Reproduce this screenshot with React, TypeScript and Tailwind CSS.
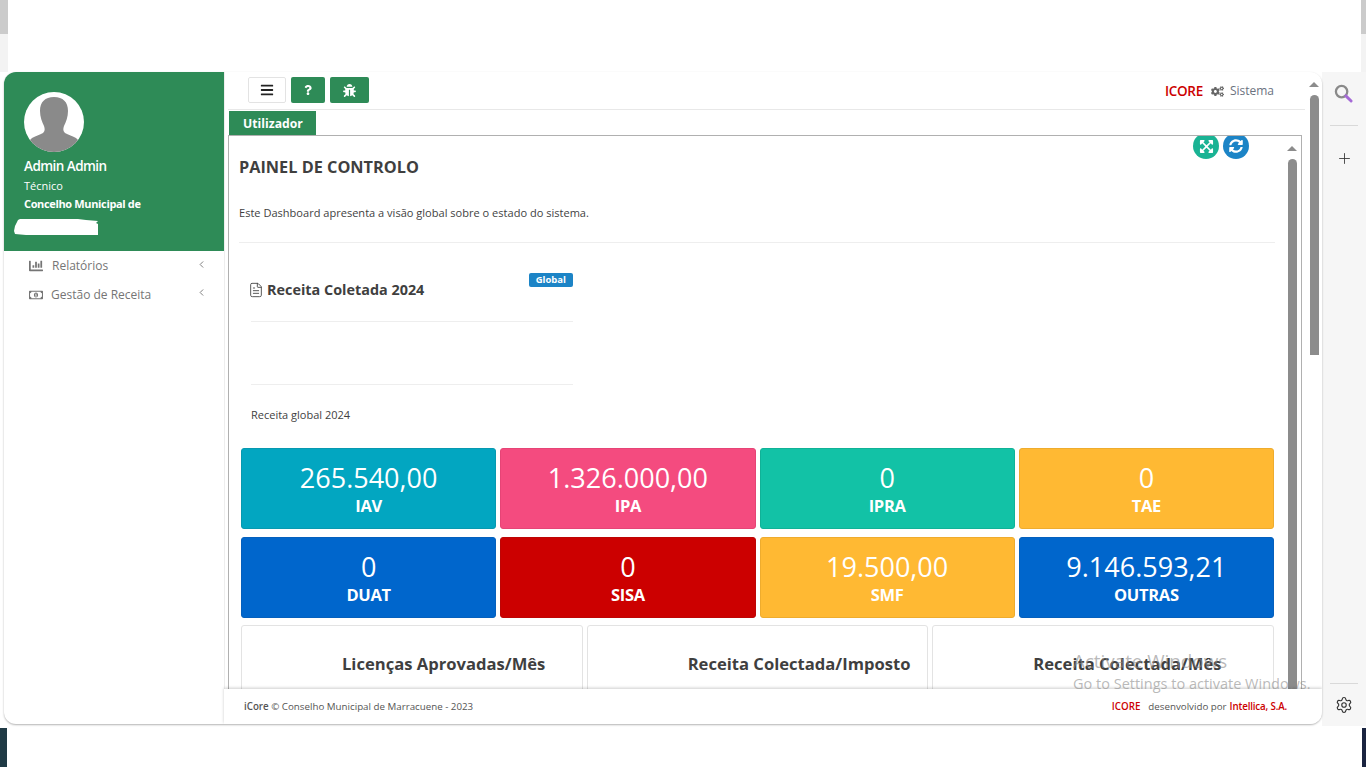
import { FaBars, FaBug, FaChartBar, FaCogs, FaExpandArrowsAlt, FaQuestion, FaRegMoneyBillAlt, FaSyncAlt } from "react-icons/fa";
import { ChevronLeft, FileText, Plus, Settings } from "lucide-react";

const stats = [
  { value: "265.540,00", label: "IAV", color: "bg-[#02a6c1] border-[#0799b0]" },
  { value: "1.326.000,00", label: "IPA", color: "bg-[#f44b7f] border-[#e64476]" },
  { value: "0", label: "IPRA", color: "bg-[#12c2a6] border-[#10b297]" },
  { value: "0", label: "TAE", color: "bg-[#ffb933] border-[#eeac2e]" },
  { value: "0", label: "DUAT", color: "bg-[#0066cc] border-[#0560bd]" },
  { value: "0", label: "SISA", color: "bg-[#cc0000] border-[#bd0505]" },
  { value: "19.500,00", label: "SMF", color: "bg-[#ffb933] border-[#eeac2e]" },
  { value: "9.146.593,21", label: "OUTRAS", color: "bg-[#0066cc] border-[#0560bd]" },
];

const charts = ["Licenças Aprovadas/Mês", "Receita Colectada/Imposto", "Receita Colectada/Mês"];

function Scrollbar({ thumb, className }: { thumb: string; className: string }) {
  return (
    <div className={"flex flex-col items-center " + className}>
      <div className="mt-[10px] h-0 w-0 border-x-[5px] border-b-[5px] border-x-transparent border-b-[#8c8c8c]" />
      <div className={"mt-[8px] w-[9px] rounded-t-[5px] bg-[#8c8c8c] " + thumb} />
    </div>
  );
}

function Sidebar() {
  return (
    <aside className="w-[220px] shrink-0">
      <div className="h-[179px] bg-[#2e8b57] pl-[20px] pt-[20px] text-white">
        <div className="h-[60px] w-[60px] overflow-hidden rounded-full bg-white">
          <svg viewBox="0 0 60 60" className="h-full w-full">
            <path
              d="M30 5c-9 0-14 5-14 14 0 6 2 11 4 15 1 3 1 5-1 7-3 2-8 3-11 5l-4 4 6 12h40l6-12-4-4c-3-2-8-3-11-5-2-2-2-4-1-7 2-4 4-9 4-15 0-9-5-14-14-14z"
              fill="#8a8a8a"
            />
          </svg>
        </div>
        <p className="mt-[4px] text-[13.5px] font-semibold leading-[20px] tracking-[-0.55px]">Admin Admin</p>
        <p className="mt-[1px] text-[11px] leading-[18px]">Técnico</p>
        <p className="text-[11px] font-bold leading-[18px] tracking-[-0.35px]">Concelho Municipal de</p>
        <svg viewBox="0 0 84 17" className="-ml-[10px] mt-[5px] h-[17px] w-[84px]">
          <path d="M6 1h58l8 1 12 1-2 2 2 1v11H12l-11-1-1-3 1-5 3-6z" fill="#fff" />
        </svg>
      </div>
      <nav className="text-[12px] text-[#757575]">
        <div className="flex h-[29px] items-center pl-[25px] pr-[17px] pt-[1px]">
          <FaChartBar className="w-[14px] text-[14px]" />
          <span className="ml-[9px] flex-1">Relatórios</span>
          <ChevronLeft className="mb-[4px] h-[11px] w-[11px]" strokeWidth={2} />
        </div>
        <div className="flex h-[29px] items-center pl-[25px] pr-[17px]">
          <FaRegMoneyBillAlt className="w-[14px] text-[14px]" />
          <span className="ml-[8px] flex-1">Gestão de Receita</span>
          <ChevronLeft className="mb-[4px] h-[11px] w-[11px]" strokeWidth={2} />
        </div>
      </nav>
    </aside>
  );
}

function TopBar() {
  return (
    <div className="flex h-[38px] items-start border-b border-[#e8e8e8] pl-[20px] pt-[5px] pr-[31px]">
      <button className="flex h-[26px] w-[38px] items-center justify-center rounded-[2px] border border-[#e3e3e3] bg-white text-[14px] text-[#222]">
        <FaBars />
      </button>
      <button className="ml-[5px] flex h-[26px] w-[34px] items-center justify-center rounded-[2px] bg-[#2e8b57] text-[10px] text-white">
        <FaQuestion />
      </button>
      <button className="ml-[5px] flex h-[26px] w-[39px] items-center justify-center rounded-[2px] bg-[#2e8b57] text-[13px] text-white">
        <FaBug />
      </button>
      <div className="ml-auto flex h-[26px] items-center pt-[2px] text-[12px]">
        <span className="text-[13.5px] font-semibold tracking-[-0.3px] text-[#cc0000]">ICORE</span>
        <FaCogs className="ml-[8px] text-[13px] text-[#666]" />
        <span className="ml-[6px] text-[#6b7280]">Sistema</span>
      </div>
    </div>
  );
}

function StatCard({ value, label, color }: { value: string; label: string; color: string }) {
  return (
    <div className={"flex h-[81px] flex-col items-center rounded-[3px] border pt-[11px] text-white " + color}>
      <p className="text-[27px] leading-[36px]">{value}</p>
      <p className="text-[16.5px] font-bold leading-[18px] tracking-[-0.3px] mt-[1px]">{label}</p>
    </div>
  );
}

function Dashboard() {
  return (
    <div className="relative flex h-[578px] overflow-hidden border-x border-[#b0b0b0]">
      <div className="absolute right-[52px] top-[-3px] flex gap-[4px]">
        <div className="flex h-[26px] w-[26px] items-center justify-center rounded-full bg-[#1ab394] text-[15px] text-white">
          <FaExpandArrowsAlt />
        </div>
        <div className="flex h-[26px] w-[26px] items-center justify-center rounded-full bg-[#1c84c6] text-[14px] text-white">
          <FaSyncAlt />
        </div>
      </div>
      <div className="w-[1059px] shrink-0 pl-[10px] text-[#3f3f3f]">
        <h1 className="mt-[20px] text-[16.3px] font-bold leading-[22px]">PAINEL DE CONTROLO</h1>
        <p className="mt-[27px] text-[11.05px] leading-[16px]">Este Dashboard apresenta a visão global sobre o estado do sistema.</p>
        <div className="mt-[21px] h-px w-[1036px] bg-[#eeeeee]" />
        <div className="ml-[12px] w-[322px] pt-[30px]">
          <div className="relative flex h-[49px] items-start border-b border-[#eeeeee] pt-[8px]">
            <FileText className="-ml-[3px] mt-[1px] h-[16px] w-[16px]" strokeWidth={1.3} />
            <h2 className="ml-[3px] text-[14.4px] font-bold leading-[18px]">Receita Coletada 2024</h2>
            <span className="absolute right-0 top-0 rounded-[2px] bg-[#1c84c6] px-[7px] text-[9.5px] font-bold leading-[14px] text-white">Global</span>
          </div>
          <div className="h-[63px] border-b border-[#eeeeee]" />
          <p className="mt-[22px] text-[11px] leading-[16px]">Receita global 2024</p>
        </div>
        <div className="ml-[2px] mt-[25px] grid w-[1033px] grid-cols-4 gap-x-[4px] gap-y-[8px]">
          {stats.map((s) => (
            <StatCard key={s.label} {...s} />
          ))}
        </div>
        <div className="ml-[2px] mt-[7px] grid w-[1033px] grid-cols-3 gap-x-[4px]">
          {charts.map((c) => (
            <div key={c} className="h-[120px] rounded-[3px] border border-[#e3e3e3] pl-[100px] pt-[27px] text-[16.6px] font-bold leading-[22px] whitespace-nowrap">
              {c}
            </div>
          ))}
        </div>
      </div>
      <Scrollbar className="w-[10px] ml-[-1px]" thumb="h-[540px]" />
    </div>
  );
}

function Footer() {
  return (
    <footer className="absolute bottom-0 left-0 right-0 flex h-[35px] items-center justify-between bg-white pl-[20px] pr-[35px] pt-[2px] text-[9.75px] text-[#555] shadow-[0_-1px_3px_rgba(0,0,0,0.2)]">
      <p>
        <b className="font-semibold">iCore</b> © Conselho Municipal de Marracuene - 2023
      </p>
      <p>
        <span className="font-semibold text-[#cc0000]">ICORE</span>
        <span className="ml-[8px]">desenvolvido por</span>
        <span className="ml-[3px] font-semibold tracking-[-0.15px] text-[#cc0000]">Intellica, S.A.</span>
      </p>
    </footer>
  );
}

export default function App() {
  return (
    <div className="relative flex h-[770px] w-[1366px] flex-col overflow-hidden bg-white font-['Open_Sans',sans-serif]">
      <div className="flex h-[72px] justify-between">
        <div className="w-[8px] bg-[#f3f3f3]">
          <div className="h-[34px] bg-[#cbcbcb]" />
        </div>
        <div className="w-[5px] bg-[#f3f3f3]">
          <div className="h-[34px] bg-[#cbcbcb]" />
        </div>
      </div>

      <div className="flex h-[654px] bg-white">
        <div className="w-[4px]" />
        <div className="relative flex h-[652px] w-[1318px] overflow-hidden rounded-xl bg-white shadow-[0_1px_2px_rgba(0,0,0,0.3)]">
          <Sidebar />
          <div className="flex flex-1 border-l border-[#eeeeee]">
            <div className="w-[1080px] pl-[3px]">
              <TopBar />
              <div className="mr-[3px] mt-[1px] h-[25px] border-b border-[#b0b0b0] pl-px">
                <div className="flex h-[24px] w-[87px] items-center justify-center bg-[#2e8b57] pl-[1px] pt-[2px] text-[12.2px] font-bold text-white">Utilizador</div>
              </div>
              <div className="mr-[3px]">
                <Dashboard />
              </div>
            </div>
            <Scrollbar className="ml-[4px] w-[10px]" thumb="h-[260px]" />
          </div>
          <div className="absolute left-[220px] right-0 bottom-0">
            <Footer />
          </div>
        </div>
        <div className="flex flex-1 flex-col items-center bg-[#f6f6f6]">
          <svg viewBox="0 0 20 20" className="ml-[-1px] mt-[12px] h-[19px] w-[19px]">
            <circle cx="8" cy="8" r="6" fill="none" stroke="#8a8a8a" strokeWidth="2.4" />
            <path d="M12.5 12.5l5.5 5.5" stroke="#a56ad6" strokeWidth="3" strokeLinecap="round" />
          </svg>
          <div className="mt-[22px] h-px w-[28px] bg-[#d9d9d9]" />
          <Plus className="mt-[24px] h-[17px] w-[17px] text-[#333]" strokeWidth={1.2} />
          <div className="mt-auto h-px w-[28px] bg-[#d9d9d9]" />
          <Settings className="mb-[12px] mt-[12px] h-[18px] w-[18px] text-[#333]" strokeWidth={1.5} />
        </div>
      </div>

      <div className="flex h-[44px] justify-between pt-[2px]">
        <div className="h-[39px] w-[7px] bg-[#1f3a45]" />
        <div className="h-[39px] w-[4px] bg-[#1a2440]" />
      </div>

      <div className="pointer-events-none absolute left-[1073px] top-[651px] text-[#8a8a8a]/60">
        <p className="text-[18.8px] leading-[20px]">Activate Windows</p>
        <p className="mt-[4px] text-[14.5px] leading-[18px] whitespace-nowrap">Go to Settings to activate Windows.</p>
      </div>
    </div>
  );
}
